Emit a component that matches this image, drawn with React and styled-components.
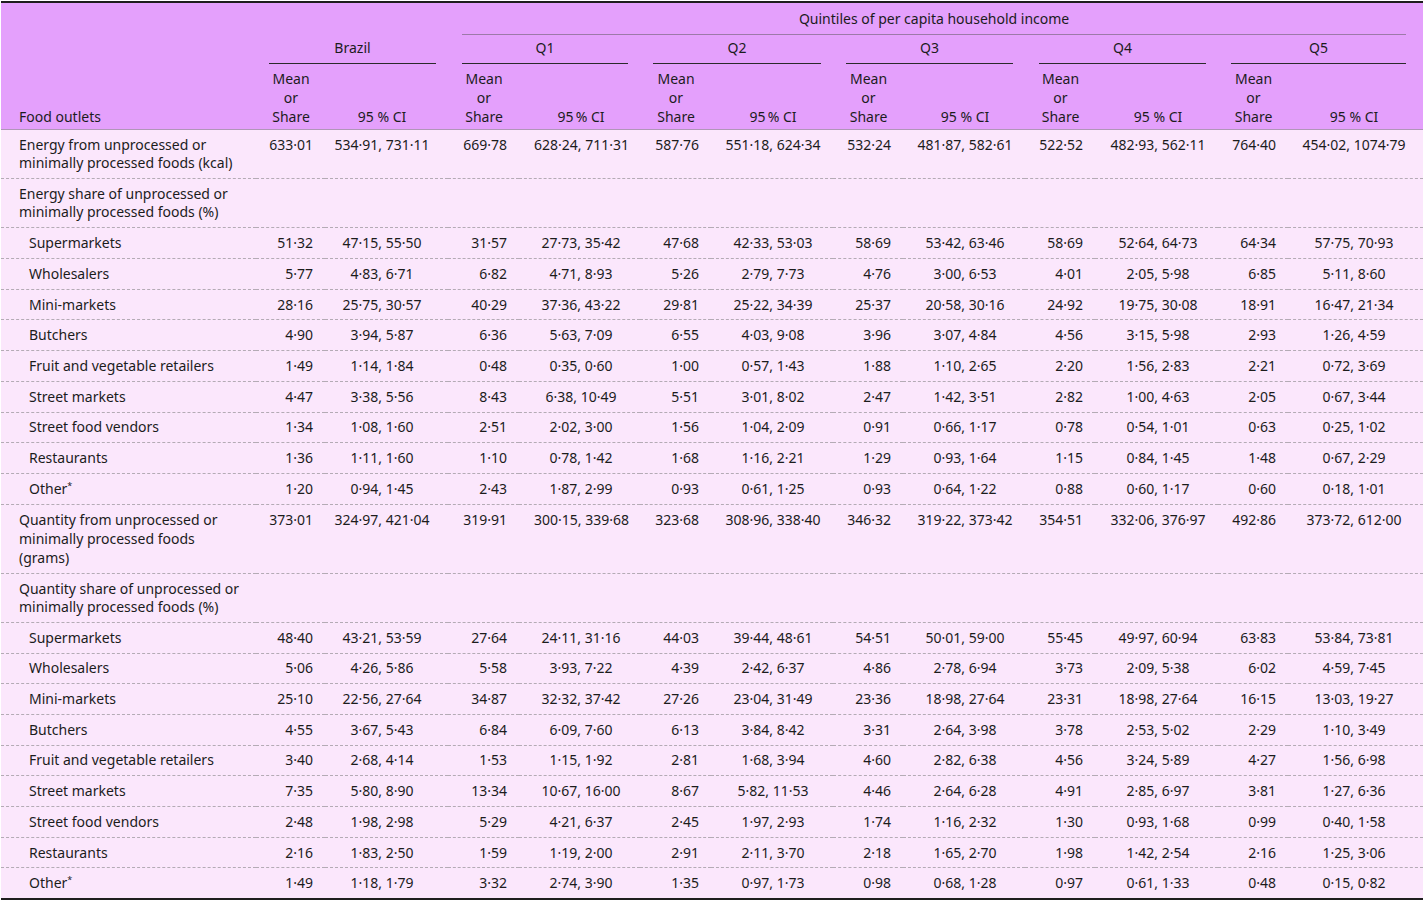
import React from 'react';
import styled, { createGlobalStyle } from 'styled-components';

const Global = createGlobalStyle`
  html, body { margin: 0; padding: 0; background: #ffffff; }
  body { font-family: "Noto Sans", "Liberation Sans", sans-serif; color: #1c1c1c; }
`;

const Wrap = styled.div`
  padding: 1px 3px 0 1px;
`;

const Table = styled.table`
  width: 1422px;
  table-layout: fixed;
  border-collapse: collapse;
  font-size: 14px;
  border-top: 2px solid #1e1e1e;
  border-bottom: 2px solid #1e1e1e;
`;

const Col = styled.col`
  width: ${(p) => p.$w}px;
`;

const Head = styled.thead`
  background: #e4a0fc;
  border-bottom: 1px solid #b096b8;
`;

const Body = styled.tbody`
  background: #fbe7fc;
`;

const HeadCell = styled.th`
  font-weight: normal;
  line-height: 19px;
  text-align: ${(p) => p.$align || 'center'};
  vertical-align: bottom;
  padding: ${(p) => p.$pad || '0'};
`;

const Rule = styled.div`
  margin: 0 ${(p) => p.$r ?? 12}px 0 ${(p) => p.$l ?? 13}px;
  padding: ${(p) => (p.$top ? '6px 0 6px' : '3px 0 6px')};
  border-bottom: 1px solid ${(p) => (p.$soft ? '#9c7aa8' : '#2a2a2a')};
`;

const Row = styled.tr`
  & > td {
    border-bottom: ${(p) => (p.$end ? 'none' : '1px dashed #b4abb5')};
  }
`;

const Cell = styled.td`
  padding: 5.8px 0 5.4px;
  line-height: ${(p) => (p.$lines === 3 ? '19px' : '18.5px')};
  vertical-align: top;
  white-space: nowrap;
`;

const Label = styled(Cell)`
  padding-left: ${(p) => (p.$sub ? 28 : 18)}px;
  padding-right: 8px;
`;

const Mean = styled(Cell)`
  text-align: right;
  padding-left: 13px;
  padding-right: 12px;
`;

const CI = styled(Cell)`
  text-align: center;
  padding-left: ${(p) => p.$pl ?? 14}px;
  padding-right: ${(p) => p.$pr ?? 12}px;
`;

const Sup = styled.sup`
  font-size: 9px;
  line-height: 0;
  vertical-align: 5px;
`;

const groups = [
  { name: 'Brazil', mw: 69, cw: 123, pl: 3, pr: 12, ci: '95 % CI' },
  { name: 'Q1', mw: 71, cw: 121, pl: 15, pr: 12, ci: '95\u2009% CI' },
  { name: 'Q2', mw: 71, cw: 122, pl: 14, pr: 12, ci: '95\u2009% CI' },
  { name: 'Q3', mw: 70, cw: 122, pl: 14, pr: 12, ci: '95 % CI' },
  { name: 'Q4', mw: 70, cw: 123, pl: 15, pr: 12, ci: '95 % CI' },
  { name: 'Q5', mw: 70, cw: 135, pl: 14, pr: 17, ci: '95 % CI' },
];

const rows = [
  { label: ['Energy from unprocessed or', 'minimally processed foods (kcal)'], v: ['633·01', '534·91, 731·11', '669·78', '628·24, 711·31', '587·76', '551·18, 624·34', '532·24', '481·87, 582·61', '522·52', '482·93, 562·11', '764·40', '454·02, 1074·79'] },
  { label: ['Energy share of unprocessed or', 'minimally processed foods (%)'], v: [] },
  { sub: true, label: ['Supermarkets'], v: ['51·32', '47·15, 55·50', '31·57', '27·73, 35·42', '47·68', '42·33, 53·03', '58·69', '53·42, 63·46', '58·69', '52·64, 64·73', '64·34', '57·75, 70·93'] },
  { sub: true, label: ['Wholesalers'], v: ['5·77', '4·83, 6·71', '6·82', '4·71, 8·93', '5·26', '2·79, 7·73', '4·76', '3·00, 6·53', '4·01', '2·05, 5·98', '6·85', '5·11, 8·60'] },
  { sub: true, label: ['Mini-markets'], v: ['28·16', '25·75, 30·57', '40·29', '37·36, 43·22', '29·81', '25·22, 34·39', '25·37', '20·58, 30·16', '24·92', '19·75, 30·08', '18·91', '16·47, 21·34'] },
  { sub: true, label: ['Butchers'], v: ['4·90', '3·94, 5·87', '6·36', '5·63, 7·09', '6·55', '4·03, 9·08', '3·96', '3·07, 4·84', '4·56', '3·15, 5·98', '2·93', '1·26, 4·59'] },
  { sub: true, label: ['Fruit and vegetable retailers'], v: ['1·49', '1·14, 1·84', '0·48', '0·35, 0·60', '1·00', '0·57, 1·43', '1·88', '1·10, 2·65', '2·20', '1·56, 2·83', '2·21', '0·72, 3·69'] },
  { sub: true, label: ['Street markets'], v: ['4·47', '3·38, 5·56', '8·43', '6·38, 10·49', '5·51', '3·01, 8·02', '2·47', '1·42, 3·51', '2·82', '1·00, 4·63', '2·05', '0·67, 3·44'] },
  { sub: true, label: ['Street food vendors'], v: ['1·34', '1·08, 1·60', '2·51', '2·02, 3·00', '1·56', '1·04, 2·09', '0·91', '0·66, 1·17', '0·78', '0·54, 1·01', '0·63', '0·25, 1·02'] },
  { sub: true, label: ['Restaurants'], v: ['1·36', '1·11, 1·60', '1·10', '0·78, 1·42', '1·68', '1·16, 2·21', '1·29', '0·93, 1·64', '1·15', '0·84, 1·45', '1·48', '0·67, 2·29'] },
  { sub: true, star: true, label: ['Other'], v: ['1·20', '0·94, 1·45', '2·43', '1·87, 2·99', '0·93', '0·61, 1·25', '0·93', '0·64, 1·22', '0·88', '0·60, 1·17', '0·60', '0·18, 1·01'] },
  { label: ['Quantity from unprocessed or', 'minimally processed foods', '(grams)'], v: ['373·01', '324·97, 421·04', '319·91', '300·15, 339·68', '323·68', '308·96, 338·40', '346·32', '319·22, 373·42', '354·51', '332·06, 376·97', '492·86', '373·72, 612·00'] },
  { label: ['Quantity share of unprocessed or', 'minimally processed foods (%)'], v: [] },
  { sub: true, label: ['Supermarkets'], v: ['48·40', '43·21, 53·59', '27·64', '24·11, 31·16', '44·03', '39·44, 48·61', '54·51', '50·01, 59·00', '55·45', '49·97, 60·94', '63·83', '53·84, 73·81'] },
  { sub: true, label: ['Wholesalers'], v: ['5·06', '4·26, 5·86', '5·58', '3·93, 7·22', '4·39', '2·42, 6·37', '4·86', '2·78, 6·94', '3·73', '2·09, 5·38', '6·02', '4·59, 7·45'] },
  { sub: true, label: ['Mini-markets'], v: ['25·10', '22·56, 27·64', '34·87', '32·32, 37·42', '27·26', '23·04, 31·49', '23·36', '18·98, 27·64', '23·31', '18·98, 27·64', '16·15', '13·03, 19·27'] },
  { sub: true, label: ['Butchers'], v: ['4·55', '3·67, 5·43', '6·84', '6·09, 7·60', '6·13', '3·84, 8·42', '3·31', '2·64, 3·98', '3·78', '2·53, 5·02', '2·29', '1·10, 3·49'] },
  { sub: true, label: ['Fruit and vegetable retailers'], v: ['3·40', '2·68, 4·14', '1·53', '1·15, 1·92', '2·81', '1·68, 3·94', '4·60', '2·82, 6·38', '4·56', '3·24, 5·89', '4·27', '1·56, 6·98'] },
  { sub: true, label: ['Street markets'], v: ['7·35', '5·80, 8·90', '13·34', '10·67, 16·00', '8·67', '5·82, 11·53', '4·46', '2·64, 6·28', '4·91', '2·85, 6·97', '3·81', '1·27, 6·36'] },
  { sub: true, label: ['Street food vendors'], v: ['2·48', '1·98, 2·98', '5·29', '4·21, 6·37', '2·45', '1·97, 2·93', '1·74', '1·16, 2·32', '1·30', '0·93, 1·68', '0·99', '0·40, 1·58'] },
  { sub: true, label: ['Restaurants'], v: ['2·16', '1·83, 2·50', '1·59', '1·19, 2·00', '2·91', '2·11, 3·70', '2·18', '1·65, 2·70', '1·98', '1·42, 2·54', '2·16', '1·25, 3·06'] },
  { sub: true, star: true, label: ['Other'], v: ['1·49', '1·18, 1·79', '3·32', '2·74, 3·90', '1·35', '0·97, 1·73', '0·98', '0·68, 1·28', '0·97', '0·61, 1·33', '0·48', '0·15, 0·82'] },
];

function LabelText({ row }) {
  return row.label.map((line, i) => (
    <React.Fragment key={i}>
      {i > 0 && <br />}
      {line}
      {row.star && i === row.label.length - 1 && <Sup>*</Sup>}
    </React.Fragment>
  ));
}

export default function App() {
  return (
    <Wrap>
      <Global />
      <Table>
        <colgroup>
          <Col $w={255} />
          {groups.map((g) => (
            <React.Fragment key={g.name}>
              <Col $w={g.mw} />
              <Col $w={g.cw} />
            </React.Fragment>
          ))}
        </colgroup>
        <Head>
          <tr>
            <HeadCell rowSpan={3} $align="left" $pad="0 0 3.5px 18px">Food outlets</HeadCell>
            <HeadCell colSpan={2} />
            <HeadCell colSpan={10}>
              <Rule $top $soft $l={14} $r={17}>Quintiles of per capita household income</Rule>
            </HeadCell>
          </tr>
          <tr>
            {groups.map((g, i) => (
              <HeadCell key={g.name} colSpan={2}>
                <Rule $l={i === 0 ? 13 : g.pl === 15 ? 14 : 13} $r={g.pr}>{g.name}</Rule>
              </HeadCell>
            ))}
          </tr>
          <tr>
            {groups.map((g) => (
              <React.Fragment key={g.name}>
                <HeadCell $pad="4.5px 12px 3.5px 13px">Mean<br />or<br />Share</HeadCell>
                <HeadCell $pad={`4.5px ${g.pr}px 3.5px ${g.pl}px`}>{g.ci}</HeadCell>
              </React.Fragment>
            ))}
          </tr>
        </Head>
        <Body>
          {rows.map((r, ri) => {
            const n = r.label.length;
            return (
              <Row key={ri} $end={ri === rows.length - 1}>
                <Label $sub={r.sub} $lines={n}><LabelText row={r} /></Label>
                {groups.map((g, gi) => (
                  <React.Fragment key={g.name}>
                    <Mean $lines={n}>{r.v[gi * 2] || ''}</Mean>
                    <CI $lines={n} $pl={g.pl} $pr={g.pr}>{r.v[gi * 2 + 1] || ''}</CI>
                  </React.Fragment>
                ))}
              </Row>
            );
          })}
        </Body>
      </Table>
    </Wrap>
  );
}
